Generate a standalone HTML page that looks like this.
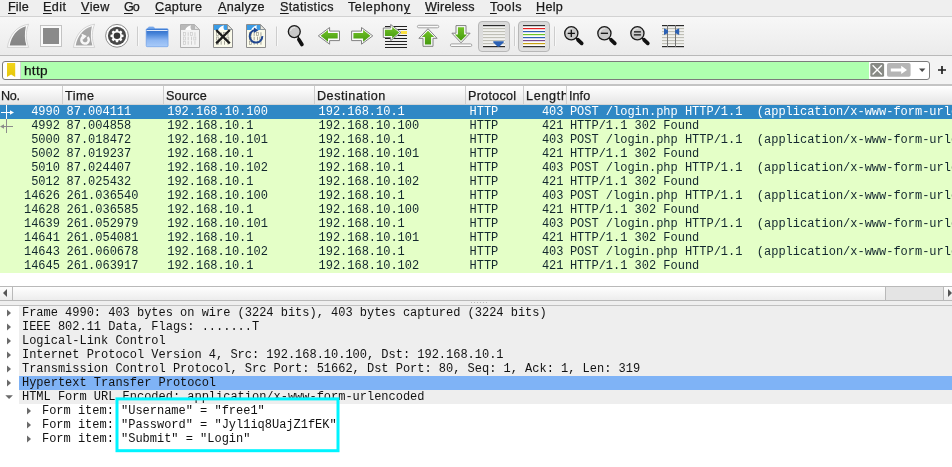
<!DOCTYPE html>
<html><head><meta charset="utf-8"><title>Wireshark</title>
<style>
*{margin:0;padding:0;box-sizing:border-box}
html,body{width:952px;height:467px;overflow:hidden;background:#fff}
body{position:relative;font-family:"Liberation Sans",sans-serif;color:#1b1b1b}
.abs{position:absolute}
#menubar{left:0;top:0;width:952px;height:16px;background:#efefef}
#menuline{left:0;top:16px;width:952px;height:1px;background:#d2d2d2}
.mi{position:absolute;top:0;height:16px;line-height:15px;font-size:12.6px;white-space:nowrap;color:#1a1a1a}
.mi u{text-decoration:underline;text-decoration-thickness:1px;text-underline-offset:2px}
.mi,.hc,#ftext{-webkit-text-stroke:0.25px #1a1a1a}
#toolbar{left:0;top:17px;width:952px;height:38px;background:linear-gradient(#f7f7f7,#f1f1f1 50%,#ebebeb)}
#tbline{left:0;top:55px;width:952px;height:1px;background:#b9b9b9}
#filterbar{left:0;top:56px;width:952px;height:28px;background:#f3f3f3}
#fline{left:0;top:84px;width:952px;height:2px;background:#c4c4c4}
#field{left:2px;top:61px;width:928px;height:19px;border:1px solid #7b7b7b;border-radius:3px;background:#fff;overflow:hidden}
#green{left:18px;top:0;width:848px;height:17px;background:#afffaf}
#ftext{left:24.4px;top:61px;height:19px;line-height:19px;font-size:13.6px;letter-spacing:0.3px;color:#111}
#hdr{left:0;top:86px;width:952px;height:18px;background:linear-gradient(#ffffff,#f4f4f4 45%,#e6e6e6)}
.hc{position:absolute;top:87px;height:17px;line-height:18px;font-size:12.6px;white-space:nowrap;overflow:hidden;color:#1a1a1a}
.hs{position:absolute;top:86px;width:1px;height:18px;background:#cdcdcd}
.row{position:absolute;left:0;width:952px;height:14px;background:#e4ffc7;color:#12272e;font-family:"Liberation Mono",monospace;font-size:12px;line-height:14px;white-space:pre;overflow:hidden;letter-spacing:-0.012px}
.row.sel{background:#2f88c5;color:#fff}
.row span{position:absolute;top:0}
.tr{position:absolute;height:14px;font-family:"Liberation Mono",monospace;font-size:12px;line-height:14px;white-space:pre;color:#111;overflow:hidden;letter-spacing:-0.014px}
.tri{position:absolute;width:0;height:0}
.hc,.tr,.row,.mi,#ftext{will-change:transform}
</style></head><body>

<div class="abs" id="menubar"></div><div class="abs" id="menuline"></div>
<div class="mi" style="left:7.6px;letter-spacing:0.16px"><u>F</u>ile</div>
<div class="mi" style="left:43.2px;letter-spacing:0.43px"><u>E</u>dit</div>
<div class="mi" style="left:81.0px;letter-spacing:0.44px"><u>V</u>iew</div>
<div class="mi" style="left:124.2px;letter-spacing:-1.01px"><u>G</u>o</div>
<div class="mi" style="left:155.4px;letter-spacing:0.35px"><u>C</u>apture</div>
<div class="mi" style="left:217.5px;letter-spacing:0.30px"><u>A</u>nalyze</div>
<div class="mi" style="left:279.5px;letter-spacing:0.34px"><u>S</u>tatistics</div>
<div class="mi" style="left:348.2px;letter-spacing:0.57px">Telephon<u>y</u></div>
<div class="mi" style="left:425.4px;letter-spacing:0.17px"><u>W</u>ireless</div>
<div class="mi" style="left:489.7px;letter-spacing:0.52px"><u>T</u>ools</div>
<div class="mi" style="left:536.3px;letter-spacing:0.29px"><u>H</u>elp</div>
<div class="abs" id="toolbar"></div><div class="abs" id="tbline"></div>
<svg class="abs" style="left:0;top:0" width="952" height="104" viewBox="0 0 952 104"><defs>
<linearGradient id="gG" x1="0" y1="0" x2="0" y2="1"><stop offset="0" stop-color="#72c226"/><stop offset="1" stop-color="#459a10"/></linearGradient>
<linearGradient id="gH" x1="0" y1="0" x2="1" y2="0"><stop offset="0" stop-color="#4ea818"/><stop offset="1" stop-color="#7cc438"/></linearGradient>
<linearGradient id="gHl" x1="1" y1="0" x2="0" y2="0"><stop offset="0" stop-color="#4ea818"/><stop offset="1" stop-color="#7cc438"/></linearGradient>
<linearGradient id="gF" x1="0" y1="0" x2="0" y2="1"><stop offset="0" stop-color="#4583d8"/><stop offset="0.12" stop-color="#3673cc"/><stop offset="0.3" stop-color="#4a86da"/><stop offset="0.65" stop-color="#8fb8f2"/><stop offset="1" stop-color="#a9cbf9"/></linearGradient>
<linearGradient id="gBtn" x1="0" y1="0" x2="0" y2="1"><stop offset="0" stop-color="#d9d9d9"/><stop offset="1" stop-color="#e0e0e0"/></linearGradient>
</defs><defs><linearGradient id="gf1" x1="0" y1="0" x2="0" y2="1"><stop offset="0" stop-color="#909090"/><stop offset="1" stop-color="#858585"/></linearGradient></defs>
<path d="M7.4,47.4 C9.4,35.5 16,26 28.6,24.2 C25.6,31 25.5,40 28.7,47.4 Z" fill="#fbfbfb" stroke="#c4c4c4" stroke-width="0.7" stroke-linejoin="round"/>
<path d="M9.7,45.5 C11.6,36 16.8,28.6 25.9,26.2 C24.4,32.5 24.5,40 26.4,45.5 Z" fill="url(#gf1)"/><rect x="40.5" y="25.5" width="21" height="21" fill="#fafafa" stroke="#bdbdbd" stroke-width="0.9"/><rect x="43" y="28" width="16" height="16" fill="#8a8a8a"/><defs><linearGradient id="gf2" x1="0" y1="0" x2="0" y2="1"><stop offset="0" stop-color="#a9a9a9"/><stop offset="1" stop-color="#a3a3a3"/></linearGradient></defs>
<path d="M73.4,47.4 C75.4,35.5 82,26 94.6,24.2 C91.6,31 91.5,40 94.7,47.4 Z" fill="#fbfbfb" stroke="#c4c4c4" stroke-width="0.7" stroke-linejoin="round"/>
<path d="M75.7,45.5 C77.6,36 82.8,28.6 91.9,26.2 C90.4,32.5 90.5,40 92.4,45.5 Z" fill="url(#gf2)"/><path d="M87.6,37.2 A3.7,3.7 0 1 1 83.4,36.6" fill="none" stroke="#f8f8f8" stroke-width="2.5"/><path d="M81.4,33.4 L86.8,36 L82.8,39.8 Z" fill="#f8f8f8"/><circle cx="117" cy="35.8" r="11.4" fill="#fdfdfd" stroke="#808080" stroke-width="0.9"/><circle cx="117" cy="35.8" r="9.1" fill="#484848"/><path d="M115.9,29.3 H118.1 L118.6,32 H115.4 Z" fill="#fff" transform="rotate(0 117 35.8)"/><path d="M115.9,29.3 H118.1 L118.6,32 H115.4 Z" fill="#fff" transform="rotate(45 117 35.8)"/><path d="M115.9,29.3 H118.1 L118.6,32 H115.4 Z" fill="#fff" transform="rotate(90 117 35.8)"/><path d="M115.9,29.3 H118.1 L118.6,32 H115.4 Z" fill="#fff" transform="rotate(135 117 35.8)"/><path d="M115.9,29.3 H118.1 L118.6,32 H115.4 Z" fill="#fff" transform="rotate(180 117 35.8)"/><path d="M115.9,29.3 H118.1 L118.6,32 H115.4 Z" fill="#fff" transform="rotate(225 117 35.8)"/><path d="M115.9,29.3 H118.1 L118.6,32 H115.4 Z" fill="#fff" transform="rotate(270 117 35.8)"/><path d="M115.9,29.3 H118.1 L118.6,32 H115.4 Z" fill="#fff" transform="rotate(315 117 35.8)"/><circle cx="117" cy="35.8" r="4.9" fill="#fff"/><circle cx="117" cy="35.8" r="3.3" fill="#383838"/><rect x="137" y="26.5" width="1" height="19.5" fill="#cdcdcd"/><rect x="138" y="26.5" width="1" height="19.5" fill="#f8f8f8"/><rect x="276" y="26.5" width="1" height="19.5" fill="#cdcdcd"/><rect x="277" y="26.5" width="1" height="19.5" fill="#f8f8f8"/><rect x="514" y="26.5" width="1" height="19.5" fill="#cdcdcd"/><rect x="515" y="26.5" width="1" height="19.5" fill="#f8f8f8"/><rect x="554" y="26.5" width="1" height="19.5" fill="#cdcdcd"/><rect x="555" y="26.5" width="1" height="19.5" fill="#f8f8f8"/><path d="M147.6,28.8 L148.4,27.4 Q148.6,26.9 149.2,26.9 H153.2 Q153.8,26.9 154,27.4 L154.7,28.8 Z" fill="#7fb0ee" stroke="#5a93e2" stroke-width="0.5"/><rect x="146.2" y="28.7" width="21.9" height="18" rx="1" fill="url(#gF)" stroke="#5f95e4" stroke-width="0.6"/><rect x="146.6" y="30" width="21" height="0.9" fill="#f4f8fe"/><path d="M180.5,24.5 H194.5 L199.5,29.5 V47.5 H180.5 Z" fill="#f3f3f3" stroke="#b0b0b0" stroke-width="1" stroke-linejoin="round"/><path d="M181,25 H194.3 L199,29.7 V30 H181 Z" fill="#b9b9b9"/><path d="M185.2,30 C186,27.6 188,25.8 191,25.2 C190.2,26.8 190.4,28.6 191.6,30 Z" fill="#fff"/><path d="M194.5,24.8 V29.5 H199.3 Z" fill="#e4e4e4" stroke="#b0b0b0" stroke-width="0.8" stroke-linejoin="round"/><rect x="183.6" y="32.6" width="2" height="3" fill="none" stroke="#cbcbcb" stroke-width="0.7"/><rect x="187.7" y="32.3" width="0.9" height="3.6" fill="#cbcbcb"/><rect x="190.4" y="32.6" width="2" height="3" fill="none" stroke="#cbcbcb" stroke-width="0.7"/><rect x="194.5" y="32.3" width="0.9" height="3.6" fill="#cbcbcb"/><rect x="183.6" y="37.0" width="2" height="3" fill="none" stroke="#cbcbcb" stroke-width="0.7"/><rect x="187.7" y="36.7" width="0.9" height="3.6" fill="#cbcbcb"/><rect x="191.1" y="36.7" width="0.9" height="3.6" fill="#cbcbcb"/><rect x="193.8" y="37.0" width="2" height="3" fill="none" stroke="#cbcbcb" stroke-width="0.7"/><rect x="183.6" y="41.4" width="2" height="3" fill="none" stroke="#cbcbcb" stroke-width="0.7"/><rect x="187.7" y="41.1" width="0.9" height="3.6" fill="#cbcbcb"/><rect x="191.1" y="41.1" width="0.9" height="3.6" fill="#cbcbcb"/><rect x="194.5" y="41.1" width="0.9" height="3.6" fill="#cbcbcb"/><path d="M213.5,24.5 H227.5 L232.5,29.5 V47.5 H213.5 Z" fill="#fafaea" stroke="#8c8c8c" stroke-width="1" stroke-linejoin="round"/><path d="M214,25 H227.3 L232,29.7 V30 H214 Z" fill="#3b9ce6"/><path d="M218.2,30 C219,27.6 221,25.8 224,25.2 C223.2,26.8 223.4,28.6 224.6,30 Z" fill="#fff"/><path d="M227.5,24.8 V29.5 H232.3 Z" fill="#e9e9e0" stroke="#8c8c8c" stroke-width="0.8" stroke-linejoin="round"/><rect x="216.6" y="32.6" width="2" height="3" fill="none" stroke="#9a9a90" stroke-width="0.7"/><rect x="220.7" y="32.3" width="0.9" height="3.6" fill="#9a9a90"/><rect x="223.4" y="32.6" width="2" height="3" fill="none" stroke="#9a9a90" stroke-width="0.7"/><rect x="227.5" y="32.3" width="0.9" height="3.6" fill="#9a9a90"/><rect x="216.6" y="37.0" width="2" height="3" fill="none" stroke="#9a9a90" stroke-width="0.7"/><rect x="220.7" y="36.7" width="0.9" height="3.6" fill="#9a9a90"/><rect x="224.1" y="36.7" width="0.9" height="3.6" fill="#9a9a90"/><rect x="226.8" y="37.0" width="2" height="3" fill="none" stroke="#9a9a90" stroke-width="0.7"/><rect x="216.6" y="41.4" width="2" height="3" fill="none" stroke="#9a9a90" stroke-width="0.7"/><rect x="220.7" y="41.1" width="0.9" height="3.6" fill="#9a9a90"/><rect x="224.1" y="41.1" width="0.9" height="3.6" fill="#9a9a90"/><rect x="227.5" y="41.1" width="0.9" height="3.6" fill="#9a9a90"/><path d="M216.2,30 L229.8,43.4 M229.8,30 L216.2,43.4" stroke="#1c1c1c" stroke-width="2.3" stroke-linecap="butt"/><path d="M246.5,24.5 H260.5 L265.5,29.5 V47.5 H246.5 Z" fill="#fafaea" stroke="#8c8c8c" stroke-width="1" stroke-linejoin="round"/><path d="M247,25 H260.3 L265,29.7 V30 H247 Z" fill="#3b9ce6"/><path d="M251.2,30 C252,27.6 254,25.8 257,25.2 C256.2,26.8 256.4,28.6 257.6,30 Z" fill="#fff"/><path d="M260.5,24.8 V29.5 H265.3 Z" fill="#e9e9e0" stroke="#8c8c8c" stroke-width="0.8" stroke-linejoin="round"/><rect x="249.6" y="32.6" width="2" height="3" fill="none" stroke="#9a9a90" stroke-width="0.7"/><rect x="253.7" y="32.3" width="0.9" height="3.6" fill="#9a9a90"/><rect x="256.4" y="32.6" width="2" height="3" fill="none" stroke="#9a9a90" stroke-width="0.7"/><rect x="260.5" y="32.3" width="0.9" height="3.6" fill="#9a9a90"/><rect x="249.6" y="37.0" width="2" height="3" fill="none" stroke="#9a9a90" stroke-width="0.7"/><rect x="253.7" y="36.7" width="0.9" height="3.6" fill="#9a9a90"/><rect x="257.1" y="36.7" width="0.9" height="3.6" fill="#9a9a90"/><rect x="259.8" y="37.0" width="2" height="3" fill="none" stroke="#9a9a90" stroke-width="0.7"/><rect x="249.6" y="41.4" width="2" height="3" fill="none" stroke="#9a9a90" stroke-width="0.7"/><rect x="253.7" y="41.1" width="0.9" height="3.6" fill="#9a9a90"/><rect x="257.1" y="41.1" width="0.9" height="3.6" fill="#9a9a90"/><rect x="260.5" y="41.1" width="0.9" height="3.6" fill="#9a9a90"/><path d="M255.45,30.0 A6.3,6.3 0 1 0 262.3,36.1" fill="none" stroke="#1f4690" stroke-width="2"/><path d="M253.9,27.5 L258.5,30.3 L253.9,33 Z" fill="#1f4690"/><line x1="298.9" y1="39.6" x2="301.9" y2="44.5" stroke="#111" stroke-width="3.7" stroke-linecap="round"/><line x1="297.87" y1="35.17" x2="298.9" y2="39.6" stroke="#111" stroke-width="1.6"/><circle cx="294.3" cy="31.6" r="5.95" fill="#c8c8c8" stroke="#1a1a1a" stroke-width="1.35"/><path d="M290.55,31.1 A3.75,3.75 0 0 1 295.3,27.650000000000002" fill="none" stroke="#e6e6e6" stroke-width="1.1"/><path d="M339.50,31.10 L329.60,31.10 L329.60,27.50 L318.30,35.85 L329.60,44.20 L329.60,40.60 L339.50,40.60 Z" fill="#fcfcfc" stroke="#818181" stroke-width="1" stroke-linejoin="round"/><path d="M337.70,33.10 L328.00,33.10 L328.00,29.90 L320.60,35.85 L328.00,41.80 L328.00,38.60 L337.70,38.60 Z" fill="url(#gG)"/><path d="M351.60,31.10 L361.50,31.10 L361.50,27.50 L372.80,35.85 L361.50,44.20 L361.50,40.60 L351.60,40.60 Z" fill="#fcfcfc" stroke="#818181" stroke-width="1" stroke-linejoin="round"/><path d="M353.40,33.10 L363.10,33.10 L363.10,29.90 L370.50,35.85 L363.10,41.80 L363.10,38.60 L353.40,38.60 Z" fill="url(#gG)"/><rect x="385" y="26" width="22" height="1" fill="#222"/><rect x="385" y="29" width="22" height="1" fill="#222"/><rect x="385" y="35" width="22" height="1" fill="#222"/><rect x="385" y="38" width="22" height="1" fill="#222"/><rect x="385" y="41" width="22" height="1" fill="#222"/><rect x="385" y="44" width="22" height="1" fill="#222"/><rect x="385" y="47" width="22" height="1" fill="#222"/><rect x="385" y="32" width="16" height="1" fill="#222"/><rect x="401" y="31" width="6" height="3" fill="#fbe040"/><path d="M383.3,28 H390.7 V24.5 L401,32.5 L390.7,40.6 V37.5 H383.3 Z" fill="#fcfcfc" stroke="#818181" stroke-width="1" stroke-linejoin="round"/><path d="M384.9,29.7 H392.2 V27 L399.3,32.6 L392.2,38.6 V35.9 H384.9 Z" fill="url(#gG)"/><rect x="417.4" y="25.3" width="21.4" height="2.5" rx="1.3" fill="#fcfcfc" stroke="#8e8e8e" stroke-width="0.8"/><path d="M428,28.7 L437.1,38.3 H433 V46.3 H423 V38.3 H418.9 Z" fill="#fcfcfc" stroke="#818181" stroke-width="1" stroke-linejoin="round"/><path d="M428,30.7 L434.2,36.9 H431.1 V44.599999999999994 H424.9 V36.9 H421.8 Z" fill="url(#gG)"/><rect x="450.4" y="43.9" width="21.4" height="2.6" rx="1.3" fill="#fcfcfc" stroke="#8e8e8e" stroke-width="0.8"/><path d="M461,42.8 L470.1,33.2 H466 V25.6 H456 V33.2 H451.9 Z" fill="#fcfcfc" stroke="#818181" stroke-width="1" stroke-linejoin="round"/><path d="M461,40.8 L467.2,34.6 H464.1 V27.3 H457.9 V34.6 H454.8 Z" fill="url(#gG)"/><rect x="478.5" y="21.5" width="31" height="30" rx="3.5" fill="url(#gBtn)" stroke="#b7b7b7" stroke-width="1"/><rect x="483" y="26" width="22" height="20" fill="#f6f6f4"/><rect x="483" y="27.9" width="22" height="1.3" fill="#bfbfb6"/><rect x="483" y="30.9" width="22" height="1.3" fill="#bfbfb6"/><rect x="483" y="33.9" width="22" height="1.3" fill="#bfbfb6"/><rect x="483" y="36.9" width="22" height="1.3" fill="#bfbfb6"/><rect x="483" y="39.9" width="22" height="1.3" fill="#bfbfb6"/><rect x="483" y="42.9" width="22" height="1.3" fill="#bfbfb6"/><rect x="483" y="25" width="22" height="1.2" fill="#2a2a2a"/><rect x="483" y="46" width="22" height="1.2" fill="#2a2a2a"/><path d="M493.6,41.2 H503.4 Q504.4,41.4 503.6,42.4 L499.4,46.4 Q498.4,47 497.4,46.4 L493.4,42.4 Q492.6,41.4 493.6,41.2 Z" fill="#2b60b4"/><rect x="518.5" y="21.5" width="31" height="30" rx="3.5" fill="url(#gBtn)" stroke="#b7b7b7" stroke-width="1"/><rect x="523" y="25" width="22" height="22" fill="#fcfcfc"/><rect x="523" y="25" width="22" height="1.2" fill="#333"/><rect x="523" y="28" width="22" height="1.2" fill="#e32222"/><rect x="523" y="31" width="22" height="1.2" fill="#2f61b5"/><rect x="523" y="34" width="22" height="1.2" fill="#6dc525"/><rect x="523" y="37" width="22" height="1.2" fill="#2f61b5"/><rect x="523" y="40" width="22" height="1.2" fill="#7b4b8c"/><rect x="523" y="43" width="22" height="1.2" fill="#c8a112"/><rect x="523" y="46" width="22" height="1.2" fill="#333"/><line x1="578" y1="39.8" x2="581.7" y2="43.4" stroke="#111" stroke-width="3.7" stroke-linecap="round"/><line x1="575.26" y1="37.26" x2="578" y2="39.8" stroke="#111" stroke-width="1.6"/><circle cx="571.3" cy="33.3" r="6.6" fill="#c8c8c8" stroke="#1a1a1a" stroke-width="1.35"/><path d="M566.9,32.8 A4.3999999999999995,4.3999999999999995 0 0 1 572.3,28.699999999999996" fill="none" stroke="#e6e6e6" stroke-width="1.1"/><path d="M567.7,33.3 H574.9 M571.3,29.7 V36.9" stroke="#111" stroke-width="1.3"/><line x1="611.1" y1="39.8" x2="614.8" y2="43.4" stroke="#111" stroke-width="3.7" stroke-linecap="round"/><line x1="608.36" y1="37.26" x2="611.1" y2="39.8" stroke="#111" stroke-width="1.6"/><circle cx="604.4" cy="33.3" r="6.6" fill="#c8c8c8" stroke="#1a1a1a" stroke-width="1.35"/><path d="M600.0,32.8 A4.3999999999999995,4.3999999999999995 0 0 1 605.4,28.699999999999996" fill="none" stroke="#e6e6e6" stroke-width="1.1"/><path d="M600.8,33.3 H608" stroke="#111" stroke-width="1.3"/><line x1="644.1" y1="39.8" x2="647.8" y2="43.4" stroke="#111" stroke-width="3.7" stroke-linecap="round"/><line x1="641.36" y1="37.26" x2="644.1" y2="39.8" stroke="#111" stroke-width="1.6"/><circle cx="637.4" cy="33.3" r="6.6" fill="#c8c8c8" stroke="#1a1a1a" stroke-width="1.35"/><path d="M633.0,32.8 A4.3999999999999995,4.3999999999999995 0 0 1 638.4,28.699999999999996" fill="none" stroke="#e6e6e6" stroke-width="1.1"/><path d="M633.9,31.9 H640.9 M633.9,34.8 H640.9" stroke="#111" stroke-width="1.3"/><rect x="662" y="26" width="22" height="20" fill="#f6f6f4"/><rect x="662" y="27.9" width="22" height="1.3" fill="#bfbfb6"/><rect x="662" y="30.9" width="22" height="1.3" fill="#bfbfb6"/><rect x="662" y="33.9" width="22" height="1.3" fill="#bfbfb6"/><rect x="662" y="36.9" width="22" height="1.3" fill="#bfbfb6"/><rect x="662" y="39.9" width="22" height="1.3" fill="#bfbfb6"/><rect x="662" y="42.9" width="22" height="1.3" fill="#bfbfb6"/><rect x="662" y="25" width="22" height="1.2" fill="#2a2a2a"/><rect x="662" y="46" width="22" height="1.2" fill="#2a2a2a"/><rect x="667" y="25" width="1" height="22" fill="#777"/><rect x="675" y="25" width="1" height="22" fill="#777"/><path d="M664,28.2 L668,30.3 V32.9 L664,34.9 Z" fill="#2b60b4"/><path d="M679.2,28.2 L675.2,30.3 V32.9 L679.2,34.9 Z" fill="#2b60b4"/></svg>
<div class="abs" id="filterbar"></div><div class="abs" id="fline"></div>
<div class="abs" id="field"><div class="abs" id="green"></div></div>
<div class="abs" style="left:20px;top:62px;width:1px;height:17px;background:#d6d6d6"></div><div class="abs" id="ftext">http</div>
<svg class="abs" style="left:0;top:56px" width="952" height="30" viewBox="0 56 952 30"><defs><linearGradient id="gY" x1="0" y1="0" x2="0" y2="1"><stop offset="0" stop-color="#f2d51c"/><stop offset="1" stop-color="#e6c60a"/></linearGradient></defs><path d="M7,63 H15.2 V77 L11.1,74.4 L7,77 Z" fill="url(#gY)"/><rect x="870.3" y="63" width="13.8" height="13.8" rx="1.6" fill="#888a85"/><path d="M872.6,65.3 L881.8,74.5 M881.8,65.3 L872.6,74.5" stroke="#fff" stroke-width="1.3"/><rect x="887" y="63" width="23.6" height="13.8" rx="1.8" fill="#b5b5b5"/><path d="M890.8,68.4 H901.2 V65.7 L907,69.9 L901.2,74.1 V71.4 H890.8 Z" fill="#fff"/><path d="M919,68.4 H925.4 L922.2,71.9 Z" fill="#4a4a4a"/><path d="M938,70 H946 M942,66 V74" stroke="#222" stroke-width="1.7"/></svg>
<div class="abs" id="hdr"></div><div class="abs" style="left:0;top:104px;width:952px;height:1px;background:#d4d4d4"></div>
<div class="hc" style="left:0.7px;width:61.3px;letter-spacing:-0.30px">No.</div>
<div class="hc" style="left:64.8px;width:98.2px;letter-spacing:0.49px">Time</div>
<div class="hc" style="left:165.7px;width:148.3px;letter-spacing:0.18px">Source</div>
<div class="hc" style="left:317.1px;width:147.89999999999998px;letter-spacing:0.53px">Destination</div>
<div class="hc" style="left:467.6px;width:55.39999999999998px;letter-spacing:0.26px">Protocol</div>
<div class="hc" style="left:525.6px;width:39.89999999999998px;letter-spacing:0.69px">Length</div>
<div class="hc" style="left:569.2px;width:382.79999999999995px;letter-spacing:0.06px">Info</div>
<div class="hs" style="left:62px"></div>
<div class="hs" style="left:163px"></div>
<div class="hs" style="left:314px"></div>
<div class="hs" style="left:465px"></div>
<div class="hs" style="left:523px"></div>
<div class="hs" style="left:566px"></div>
<div class="row sel" style="top:105px"><span style="right:892.1px">4990</span><span style="left:66.5px">87.004111</span><span style="left:167.2px">192.168.10.100</span><span style="left:318.5px">192.168.10.1</span><span style="left:469.5px">HTTP</span><span style="right:388.5px">403</span><span style="left:569.9px">POST /login.php HTTP/1.1  (application/x-www-form-urlencoded)</span></div>
<div class="row" style="top:119px"><span style="right:892.1px">4992</span><span style="left:66.5px">87.004858</span><span style="left:167.2px">192.168.10.1</span><span style="left:318.5px">192.168.10.100</span><span style="left:469.5px">HTTP</span><span style="right:388.5px">421</span><span style="left:569.9px">HTTP/1.1 302 Found</span></div>
<div class="row" style="top:133px"><span style="right:892.1px">5000</span><span style="left:66.5px">87.018472</span><span style="left:167.2px">192.168.10.101</span><span style="left:318.5px">192.168.10.1</span><span style="left:469.5px">HTTP</span><span style="right:388.5px">403</span><span style="left:569.9px">POST /login.php HTTP/1.1  (application/x-www-form-urlencoded)</span></div>
<div class="row" style="top:147px"><span style="right:892.1px">5002</span><span style="left:66.5px">87.019237</span><span style="left:167.2px">192.168.10.1</span><span style="left:318.5px">192.168.10.101</span><span style="left:469.5px">HTTP</span><span style="right:388.5px">421</span><span style="left:569.9px">HTTP/1.1 302 Found</span></div>
<div class="row" style="top:161px"><span style="right:892.1px">5010</span><span style="left:66.5px">87.024407</span><span style="left:167.2px">192.168.10.102</span><span style="left:318.5px">192.168.10.1</span><span style="left:469.5px">HTTP</span><span style="right:388.5px">403</span><span style="left:569.9px">POST /login.php HTTP/1.1  (application/x-www-form-urlencoded)</span></div>
<div class="row" style="top:175px"><span style="right:892.1px">5012</span><span style="left:66.5px">87.025432</span><span style="left:167.2px">192.168.10.1</span><span style="left:318.5px">192.168.10.102</span><span style="left:469.5px">HTTP</span><span style="right:388.5px">421</span><span style="left:569.9px">HTTP/1.1 302 Found</span></div>
<div class="row" style="top:189px"><span style="right:892.1px">14626</span><span style="left:66.5px">261.036540</span><span style="left:167.2px">192.168.10.100</span><span style="left:318.5px">192.168.10.1</span><span style="left:469.5px">HTTP</span><span style="right:388.5px">403</span><span style="left:569.9px">POST /login.php HTTP/1.1  (application/x-www-form-urlencoded)</span></div>
<div class="row" style="top:203px"><span style="right:892.1px">14628</span><span style="left:66.5px">261.036585</span><span style="left:167.2px">192.168.10.1</span><span style="left:318.5px">192.168.10.100</span><span style="left:469.5px">HTTP</span><span style="right:388.5px">421</span><span style="left:569.9px">HTTP/1.1 302 Found</span></div>
<div class="row" style="top:217px"><span style="right:892.1px">14639</span><span style="left:66.5px">261.052979</span><span style="left:167.2px">192.168.10.101</span><span style="left:318.5px">192.168.10.1</span><span style="left:469.5px">HTTP</span><span style="right:388.5px">403</span><span style="left:569.9px">POST /login.php HTTP/1.1  (application/x-www-form-urlencoded)</span></div>
<div class="row" style="top:231px"><span style="right:892.1px">14641</span><span style="left:66.5px">261.054081</span><span style="left:167.2px">192.168.10.1</span><span style="left:318.5px">192.168.10.101</span><span style="left:469.5px">HTTP</span><span style="right:388.5px">421</span><span style="left:569.9px">HTTP/1.1 302 Found</span></div>
<div class="row" style="top:245px"><span style="right:892.1px">14643</span><span style="left:66.5px">261.060678</span><span style="left:167.2px">192.168.10.102</span><span style="left:318.5px">192.168.10.1</span><span style="left:469.5px">HTTP</span><span style="right:388.5px">403</span><span style="left:569.9px">POST /login.php HTTP/1.1  (application/x-www-form-urlencoded)</span></div>
<div class="row" style="top:259px"><span style="right:892.1px">14645</span><span style="left:66.5px">261.063917</span><span style="left:167.2px">192.168.10.1</span><span style="left:318.5px">192.168.10.102</span><span style="left:469.5px">HTTP</span><span style="right:388.5px">421</span><span style="left:569.9px">HTTP/1.1 302 Found</span></div>
<svg class="abs" style="left:0;top:105px" width="20" height="28" viewBox="0 105 20 28"><rect x="6" y="105" width="1" height="14" fill="#fff"/><rect x="1" y="112" width="10" height="1" fill="#fff"/><path d="M10,110.3 L14,112.5 L10,114.7 Z" fill="#fff"/><rect x="6" y="119" width="1" height="14" fill="#8c8c8c"/><rect x="3" y="126" width="10" height="1" fill="#8c8c8c"/><path d="M4,124.3 L0,126.5 L4,128.7 Z" fill="#8c8c8c"/></svg>
<div class="abs" style="left:0;top:286px;width:952px;height:15px;background:#e4e4e4;border-top:1px solid #b9b9b9;border-bottom:1px solid #b9b9b9"></div>
<div class="abs" style="left:0;top:287px;width:13px;height:13px;background:linear-gradient(#fdfdfd,#ececec);border-right:1px solid #b9b9b9"></div>
<div class="abs" style="left:13px;top:287px;width:873px;height:13px;background:linear-gradient(#fefefe,#ededed);border-right:1px solid #b9b9b9"></div>
<div class="abs" style="left:943px;top:287px;width:9px;height:13px;background:linear-gradient(#fdfdfd,#ececec);border-left:1px solid #b9b9b9"></div>
<div class="tri" style="left:3px;top:289px;border-top:4px solid transparent;border-bottom:4px solid transparent;border-right:4px solid #555"></div>
<div class="tri" style="left:948px;top:289px;border-top:4px solid transparent;border-bottom:4px solid transparent;border-left:4px solid #555"></div>
<div class="abs" style="left:0;top:301px;width:952px;height:4px;background:#efefef"></div>
<div class="abs" style="left:0;top:305px;width:952px;height:1px;background:#c0c0c0"></div>

<div class="abs" style="left:19px;top:306px;width:933px;height:14px;background:#eeeeee"></div>
<div class="tr" style="left:21.6px;top:306px">Frame 4990: 403 bytes on wire (3224 bits), 403 bytes captured (3224 bits)</div>
<div class="abs" style="left:19px;top:320px;width:933px;height:14px;background:#eeeeee"></div>
<div class="tr" style="left:21.6px;top:320px">IEEE 802.11 Data, Flags: .......T</div>
<div class="abs" style="left:19px;top:334px;width:933px;height:14px;background:#eeeeee"></div>
<div class="tr" style="left:21.6px;top:334px">Logical-Link Control</div>
<div class="abs" style="left:19px;top:348px;width:933px;height:14px;background:#eeeeee"></div>
<div class="tr" style="left:21.6px;top:348px">Internet Protocol Version 4, Src: 192.168.10.100, Dst: 192.168.10.1</div>
<div class="abs" style="left:19px;top:362px;width:933px;height:14px;background:#eeeeee"></div>
<div class="tr" style="left:21.6px;top:362px">Transmission Control Protocol, Src Port: 51662, Dst Port: 80, Seq: 1, Ack: 1, Len: 319</div>
<div class="abs" style="left:19px;top:376px;width:933px;height:14px;background:#7fb3f6"></div>
<div class="tr" style="left:21.6px;top:376px">Hypertext Transfer Protocol</div>
<div class="abs" style="left:19px;top:390px;width:933px;height:14px;background:#eeeeee"></div>
<div class="tr" style="left:21.6px;top:390px">HTML Form URL Encoded: application/x-www-form-urlencoded</div>
<div class="abs" style="left:39px;top:404px;width:913px;height:14px;background:#fff"></div>
<div class="tr" style="left:41.6px;top:404px">Form item: &quot;Username&quot; = &quot;free1&quot;</div>
<div class="abs" style="left:39px;top:418px;width:913px;height:14px;background:#fff"></div>
<div class="tr" style="left:41.6px;top:418px">Form item: &quot;Password&quot; = &quot;Jyl1iq8UajZ1fEK&quot;</div>
<div class="abs" style="left:39px;top:432px;width:913px;height:14px;background:#fff"></div>
<div class="tr" style="left:41.6px;top:432px">Form item: &quot;Submit&quot; = &quot;Login&quot;</div>
<svg class="abs" style="left:0;top:300px" width="952" height="167" viewBox="0 300 952 167"><rect x="471" y="302" width="1" height="1" fill="#bdbdbd"/><rect x="474" y="302" width="1" height="1" fill="#bdbdbd"/><rect x="477" y="302" width="1" height="1" fill="#bdbdbd"/><rect x="480" y="302" width="1" height="1" fill="#bdbdbd"/><rect x="483" y="302" width="1" height="1" fill="#bdbdbd"/><rect x="486" y="302" width="1" height="1" fill="#bdbdbd"/><path d="M7,309.4 L11,313 L7,316.6 Z" fill="#6a6a6a"/><path d="M7,323.4 L11,327 L7,330.6 Z" fill="#6a6a6a"/><path d="M7,337.4 L11,341 L7,344.6 Z" fill="#6a6a6a"/><path d="M7,351.4 L11,355 L7,358.6 Z" fill="#6a6a6a"/><path d="M7,365.4 L11,369 L7,372.6 Z" fill="#6a6a6a"/><path d="M7,379.4 L11,383 L7,386.6 Z" fill="#6a6a6a"/><path d="M5.3,395.2 H12.9 L9.1,399 Z" fill="#6a6a6a"/><path d="M27,407.4 L31,411 L27,414.6 Z" fill="#6a6a6a"/><path d="M27,421.4 L31,425 L27,428.6 Z" fill="#6a6a6a"/><path d="M27,435.4 L31,439 L27,442.6 Z" fill="#6a6a6a"/><rect x="117" y="398.9" width="221" height="51.8" fill="none" stroke="#00f4ff" stroke-width="3"/></svg>
</body></html>
